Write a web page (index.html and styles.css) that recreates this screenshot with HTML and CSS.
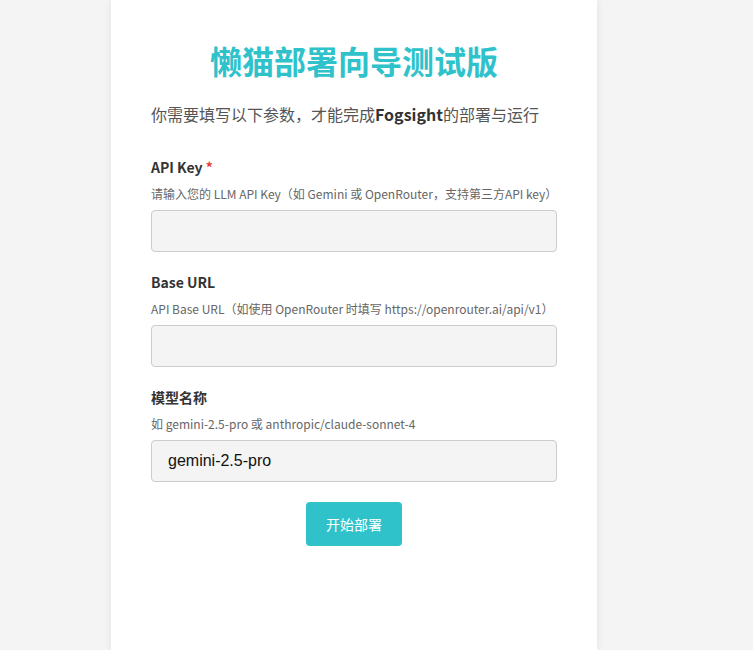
FILE: index.html
```html
<!DOCTYPE html>
<html>
<head>
  <meta charset="UTF-8">
  <meta name="viewport" content="width=device-width, initial-scale=1.0">
  <title>懒猫部署向导测试版</title>
  <link rel="stylesheet" href="styles.css">
</head>
<body>
  <div class="wizard">
    <h1>懒猫部署向导测试版</h1>
    <p class="intro">你需要填写以下参数，才能完成<strong>Fogsight</strong>的部署与运行</p>

    <div class="field">
      <label for="apiKey">API Key <span class="required">*</span></label>
      <p class="hint">请输入您的 LLM API Key（如 Gemini 或 OpenRouter，支持第三方API key）</p>
      <input type="text" id="apiKey">
    </div>

    <div class="field">
      <label for="baseUrl">Base URL</label>
      <p class="hint">API Base URL（如使用 OpenRouter 时填写 https://openrouter.ai/api/v1）</p>
      <input type="text" id="baseUrl">
    </div>

    <div class="field">
      <label for="model">模型名称</label>
      <p class="hint">如 gemini-2.5-pro 或 anthropic/claude-sonnet-4</p>
      <input type="text" id="model" value="gemini-2.5-pro">
    </div>

    <div class="actions">
      <button id="deployButton">开始部署</button>
    </div>
  </div>
</body>
</html>
```

FILE: styles.css
```css
body {
  font-family: "Noto Sans CJK SC", "Noto Sans", sans-serif;
  background-color: #f4f4f4;
  color: #333;
  margin: 0;
  padding: 0 45px 0 0;
}

.wizard {
  box-sizing: border-box;
  width: 486px;
  min-height: 100vh;
  margin: 0 auto;
  padding: 40px 40px 0;
  background-color: #fff;
  box-shadow: 0 0 8px rgba(0, 0, 0, 0.08);
}

h1 {
  margin: 0;
  font-size: 32px;
  line-height: 40px;
  font-weight: bold;
  text-align: center;
  color: #2fc2cb;
}

.intro {
  margin: 22px 0 0;
  font-size: 16px;
  line-height: 24px;
  color: #555;
}

.intro strong {
  color: #333;
}

.field {
  margin-top: 31px;
}

.field + .field {
  margin-top: 20px;
}

label {
  display: block;
  font-size: 14px;
  line-height: 20px;
  font-weight: bold;
  color: #333;
}

.required {
  color: #e53935;
}

.hint {
  margin: 8px 0 7px;
  font-size: 12px;
  line-height: 18px;
  color: #666;
}

input {
  display: block;
  box-sizing: border-box;
  width: 100%;
  height: 42px;
  padding: 0 16px;
  font-family: "Liberation Sans", Arial, sans-serif;
  font-size: 16px;
  color: #111;
  background-color: #f4f4f4;
  border: 1px solid #ccc;
  border-radius: 4px;
}

.actions {
  display: flex;
  justify-content: center;
  margin-top: 20px;
}

button {
  width: 96px;
  height: 44px;
  padding: 0;
  font-family: "Noto Sans CJK SC", sans-serif;
  font-size: 14px;
  color: #fff;
  background-color: #2fc2cb;
  border: none;
  border-radius: 4px;
  cursor: pointer;
}

button:hover {
  background-color: #27a9b1;
}
```
